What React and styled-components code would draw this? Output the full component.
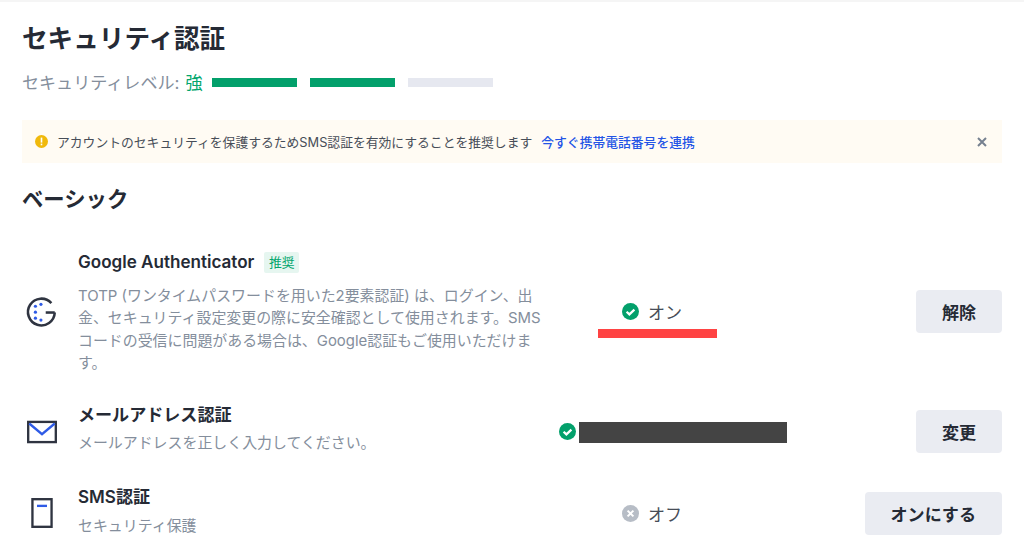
import React from "react";
import styled, { createGlobalStyle } from "styled-components";

const Global = createGlobalStyle`
  html, body { margin: 0; padding: 0; background: #fff; overflow: hidden; }
  body { font-family: Inter, "Noto Sans CJK JP", "Noto Sans", sans-serif; color: #1e2329; }
`;

const Page = styled.div`
  box-sizing: border-box;
  width: 1024px;
  height: 557px;
  padding: 0 22px;
  border-top: 2px solid #f5f5f5;
  overflow: hidden;
`;
const Title = styled.h1`
  margin: 18px 0 0;
  font-size: 25.6px;
  line-height: 38px;
  font-weight: 700;
  color: #252a35;
`;
const LevelRow = styled.div`
  display: flex;
  align-items: center;
  height: 26px;
  margin-top: 10px;
  font-size: 17.07px;
  color: #848e9c;
`;
const LevelValue = styled.span`
  color: #03a66d;
  margin-left: 6px;
  margin-right: 9px;
`;
const Bars = styled.div`
  display: flex;
  gap: 12.8px;
  margin-top: 2px;
`;
const Bar = styled.div`
  width: 85.33px;
  height: 9px;
  background: ${(p) => (p.$on ? "#03a06b" : "#e6e8f0")};
`;
const Alert = styled.div`
  display: flex;
  align-items: center;
  height: 43px;
  margin-top: 26px;
  padding: 0 13px;
  background: #fffbf3;
  font-size: 12.8px;
  color: #474d57;
`;
const AlertIcon = styled.svg`
  width: 13px;
  height: 13px;
  margin-right: 9px;
  flex: none;
`;
const AlertLink = styled.a`
  color: #2354e6;
  margin-left: 9px;
  font-weight: 500;
`;
const Close = styled.svg`
  width: 10px;
  height: 10px;
  margin-left: auto;
  margin-right: 2px;
`;
const Heading = styled.h2`
  margin: 20px 0 0;
  font-size: 21.33px;
  line-height: 32px;
  font-weight: 700;
  color: #252a35;
`;
const Row = styled.div`
  display: grid;
  grid-template-columns: 56px 480px 1fr auto;
  align-items: center;
  margin-top: ${(p) => p.$gap}px;
`;
const IconCell = styled.svg`
  width: 34px;
  height: 34px;
  margin-left: 3px;
  color: #2f3441;
`;
const RowText = styled.div`
  margin-bottom: ${(p) => p.$lift || 0}px;
`;
const RowTitleLine = styled.div`
  display: flex;
  align-items: center;
  gap: 10px;
`;
const RowTitle = styled.div`
  font-size: 17.07px;
  line-height: 26px;
  font-weight: 600;
  color: #252a35;
`;
const Tag = styled.span`
  background: #e6f6f0;
  color: #03a66d;
  font-size: 12.8px;
  line-height: 21px;
  padding: 0 4.5px;
  border-radius: 2px;
`;
const Desc = styled.div`
  font-size: 14.93px;
  line-height: 22.4px;
  color: #848e9c;
  margin-top: ${(p) => p.$top || 0}px;
  width: 470px;
`;
const Status = styled.div`
  position: relative;
  display: flex;
  align-items: center;
  gap: 9px;
  padding-left: ${(p) => p.$indent}px;
  font-size: 17.07px;
  color: #474d57;
`;
const StatusIcon = styled.svg`
  width: 17px;
  height: 17px;
  flex: none;
`;
const RedMark = styled.div`
  position: absolute;
  left: 40px;
  top: 30px;
  width: 119px;
  height: 9px;
  background: #ff4343;
`;
const Redacted = styled.div`
  width: 208px;
  height: 21px;
  margin: 2px 0 0 -6px;
  background: #444;
`;
const Button = styled.button`
  height: 43px;
  padding: 0 26px;
  border: 0;
  border-radius: 4px;
  background: #eaecf2;
  color: #252a35;
  font-family: inherit;
  font-size: 17.07px;
  font-weight: 600;
`;

const CheckIcon = () => (
  <StatusIcon viewBox="0 0 17 17">
    <circle cx="8.5" cy="8.5" r="8.5" fill="#03a06b" />
    <path d="M4.6 8.7l2.8 2.7 5-4.8" fill="none" stroke="#fff" strokeWidth="2.2" />
  </StatusIcon>
);
const OffIcon = () => (
  <StatusIcon viewBox="0 0 17 17">
    <circle cx="8.5" cy="8.5" r="8.5" fill="#b7bdc6" />
    <path d="M5.6 5.6l5.8 5.8M11.4 5.6l-5.8 5.8" fill="none" stroke="#fff" strokeWidth="2" />
  </StatusIcon>
);

export default function App() {
  return (
    <Page>
      <Global />
      <Title>セキュリティ認証</Title>
      <LevelRow>
        セキュリティレベル:
        <LevelValue>強</LevelValue>
        <Bars>
          <Bar $on />
          <Bar $on />
          <Bar />
        </Bars>
      </LevelRow>
      <Alert>
        <AlertIcon viewBox="0 0 13 13">
          <circle cx="6.5" cy="6.5" r="6.5" fill="#f0b90b" />
          <rect x="5.7" y="2.6" width="1.6" height="5" fill="#fff" />
          <rect x="5.7" y="8.6" width="1.6" height="1.7" fill="#fff" />
        </AlertIcon>
        アカウントのセキュリティを保護するためSMS認証を有効にすることを推奨します
        <AlertLink>今すぐ携帯電話番号を連携</AlertLink>
        <Close viewBox="0 0 10 10">
          <path d="M1 1l8 8M9 1l-8 8" stroke="#76808f" strokeWidth="2" fill="none" />
        </Close>
      </Alert>
      <Heading>ベーシック</Heading>

      <Row $gap={34}>
        <IconCell viewBox="0 0 32 32" fill="none">
          <path d="M28 16.5A12.6 12.6 0 1 1 24.8 7.6" stroke="currentColor" strokeWidth="2.4" />
          <path d="M19.5 16.5H28" stroke="currentColor" strokeWidth="2.4" />
          <circle cx="15" cy="8.8" r="1.5" fill="#2f5be6" />
          <circle cx="9.8" cy="10.6" r="1.5" fill="#2f5be6" />
          <circle cx="9.8" cy="16.2" r="1.5" fill="#2f5be6" />
          <circle cx="9.8" cy="21.8" r="1.5" fill="#2f5be6" />
          <circle cx="15" cy="23.6" r="1.5" fill="#2f5be6" />
        </IconCell>
        <RowText>
          <RowTitleLine>
            <RowTitle>Google Authenticator</RowTitle>
            <Tag>推奨</Tag>
          </RowTitleLine>
          <Desc $top={10}>
            TOTP (ワンタイムパスワードを用いた2要素認証) は、ログイン、出金、セキュリティ設定変更の際に安全確認として使用されます。SMSコードの受信に問題がある場合は、Google認証もご使用いただけます。
          </Desc>
        </RowText>
        <Status $indent={64}>
          <CheckIcon />
          オン
          <RedMark />
        </Status>
        <Button>解除</Button>
      </Row>

      <Row $gap={27}>
        <IconCell viewBox="0 0 32 32" fill="none">
          <rect x="3" y="6.5" width="26" height="19" stroke="currentColor" strokeWidth="2.2" />
          <path d="M4 8l12 10L28 8" stroke="#2f5be6" strokeWidth="2.2" />
        </IconCell>
        <RowText $lift={8}>
          <RowTitle>メールアドレス認証</RowTitle>
          <Desc $top={4}>メールアドレスを正しく入力してください。</Desc>
        </RowText>
        <Status $indent={1}>
          <CheckIcon />
          <Redacted />
        </Status>
        <Button>変更</Button>
      </Row>

      <Row $gap={22}>
        <IconCell viewBox="0 0 32 32" fill="none">
          <rect x="7" y="3" width="18" height="26" stroke="currentColor" strokeWidth="2.2" />
          <path d="M11.3 9.3h9.4" stroke="#2f5be6" strokeWidth="2.2" />
        </IconCell>
        <RowText $lift={5}>
          <RowTitle>SMS認証</RowTitle>
          <Desc $top={5}>セキュリティ保護</Desc>
        </RowText>
        <Status $indent={64}>
          <OffIcon />
          オフ
        </Status>
        <Button>オンにする</Button>
      </Row>
    </Page>
  );
}
